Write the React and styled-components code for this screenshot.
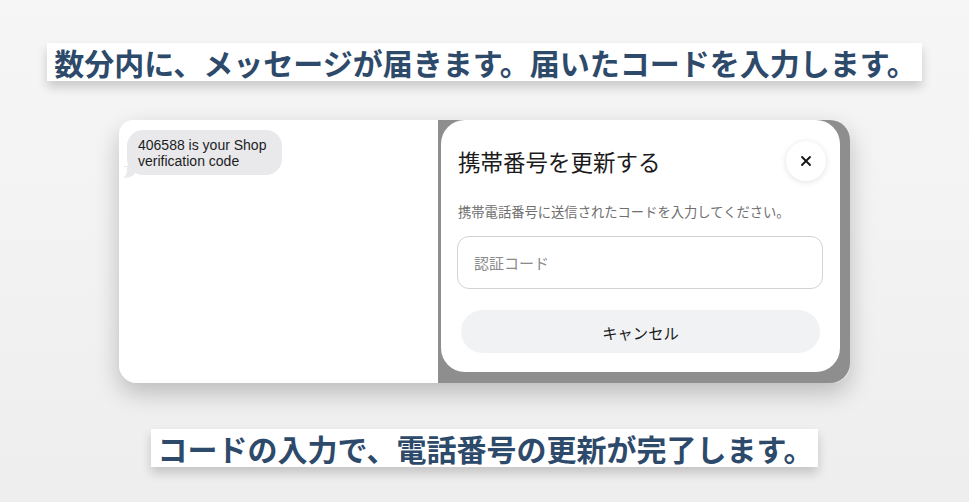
import React from 'react';
import styled, { createGlobalStyle } from 'styled-components';

const GlobalStyle = createGlobalStyle`
  html, body {
    margin: 0;
    padding: 0;
  }
  body {
    background: linear-gradient(180deg, #f6f6f6 0%, #eeeeee 100%);
    font-family: "Noto Sans CJK JP", "Noto Sans", sans-serif;
  }
`;

const Page = styled.div`
  width: 969px;
  height: 502px;
  box-sizing: border-box;
  padding-top: 43px;
  display: flex;
  flex-direction: column;
  align-items: center;
`;

const Caption = styled.div`
  background: #ffffff;
  color: #2d4a6b;
  font-family: "Noto Sans CJK JP", sans-serif;
  font-weight: 700;
  font-size: 30px;
  line-height: 38px;
  height: 38px;
  padding: 0 5px 0 7px;
  white-space: nowrap;
  box-shadow: 0 6px 10px rgba(0, 0, 0, 0.18);
  margin-top: ${(p) => p.$gap || 0}px;
`;

const Card = styled.div`
  margin-top: 39px;
  width: 731px;
  height: 263px;
  display: flex;
  border-radius: 18px;
  box-shadow: 0 10px 24px rgba(0, 0, 0, 0.22);
`;

const Thread = styled.div`
  width: 319px;
  background: #ffffff;
  border-radius: 14px 0 0 18px;
  padding: 10px 0 0 8px;
  box-sizing: border-box;
`;

const Bubble = styled.div`
  position: relative;
  display: inline-block;
  background: #e9e9eb;
  color: #1c1c1e;
  font-family: "Liberation Sans", Arial, sans-serif;
  font-size: 14px;
  line-height: 16px;
  padding: 7px 16px 6px 11px;
  border-radius: 16px;

  &::before {
    content: '';
    position: absolute;
    left: -3px;
    bottom: -3px;
    width: 12px;
    height: 12px;
    background: #e9e9eb;
    border-bottom-right-radius: 12px 8px;
  }
  &::after {
    content: '';
    position: absolute;
    left: -8px;
    bottom: -4px;
    width: 8px;
    height: 12px;
    background: #ffffff;
    border-bottom-right-radius: 8px;
  }
`;

const Backdrop = styled.div`
  flex: 1;
  background: #8e8e8e;
  border-radius: 0 20px 20px 0;
  padding: 0 10px 11px 3px;
  display: flex;
`;

const Modal = styled.div`
  flex: 1;
  background: #ffffff;
  border-radius: 24px;
  padding: 21px 14px 19px 17px;
  display: flex;
  flex-direction: column;
  color: #1b1b1b;
`;

const Header = styled.div`
  display: flex;
  align-items: center;
  justify-content: space-between;
`;

const Title = styled.h2`
  margin: 0;
  font-size: 22.5px;
  font-weight: 400;
`;

const CloseButton = styled.button`
  width: 40px;
  height: 40px;
  border-radius: 50%;
  border: none;
  background: #ffffff;
  box-shadow: 0 1px 6px rgba(0, 0, 0, 0.12);
  display: flex;
  align-items: center;
  justify-content: center;
  padding: 0;
`;

const Hint = styled.p`
  margin: 22px 0 0 0;
  font-size: 13.3px;
  color: #6f6f6f;
  line-height: 18px;
`;

const CodeInput = styled.input`
  margin: 15px 3px 0 -1px;
  height: 53px;
  box-sizing: border-box;
  border: 1px solid #d3d3d3;
  border-radius: 12px;
  padding: 0 16px;
  font-family: inherit;
  font-size: 15px;
  outline: none;

  &::placeholder {
    color: #8a8a8a;
  }
`;

const CancelButton = styled.button`
  margin: 21px 6px 0 3px;
  height: 43px;
  border: none;
  border-radius: 22px;
  background: #f1f2f4;
  font-family: inherit;
  font-size: 15.3px;
  color: #1b1b1b;
`;

const CloseIcon = () => (
  <svg width="12" height="12" viewBox="0 0 12 12" fill="none">
    <path d="M2 2L10 10M10 2L2 10" stroke="#111" strokeWidth="1.8" strokeLinecap="round" />
  </svg>
);

const App = () => (
  <>
    <GlobalStyle />
    <Page>
      <Caption>数分内に、メッセージが届きます。届いたコードを入力します。</Caption>
      <Card>
        <Thread>
          <Bubble>
            406588 is your Shop
            <br />
            verification code
          </Bubble>
        </Thread>
        <Backdrop>
          <Modal>
            <Header>
              <Title>携帯番号を更新する</Title>
              <CloseButton aria-label="閉じる">
                <CloseIcon />
              </CloseButton>
            </Header>
            <Hint>携帯電話番号に送信されたコードを入力してください。</Hint>
            <CodeInput placeholder="認証コード" />
            <CancelButton>キャンセル</CancelButton>
          </Modal>
        </Backdrop>
      </Card>
      <Caption $gap={46}>コードの入力で、電話番号の更新が完了します。</Caption>
    </Page>
  </>
);

export default App;
